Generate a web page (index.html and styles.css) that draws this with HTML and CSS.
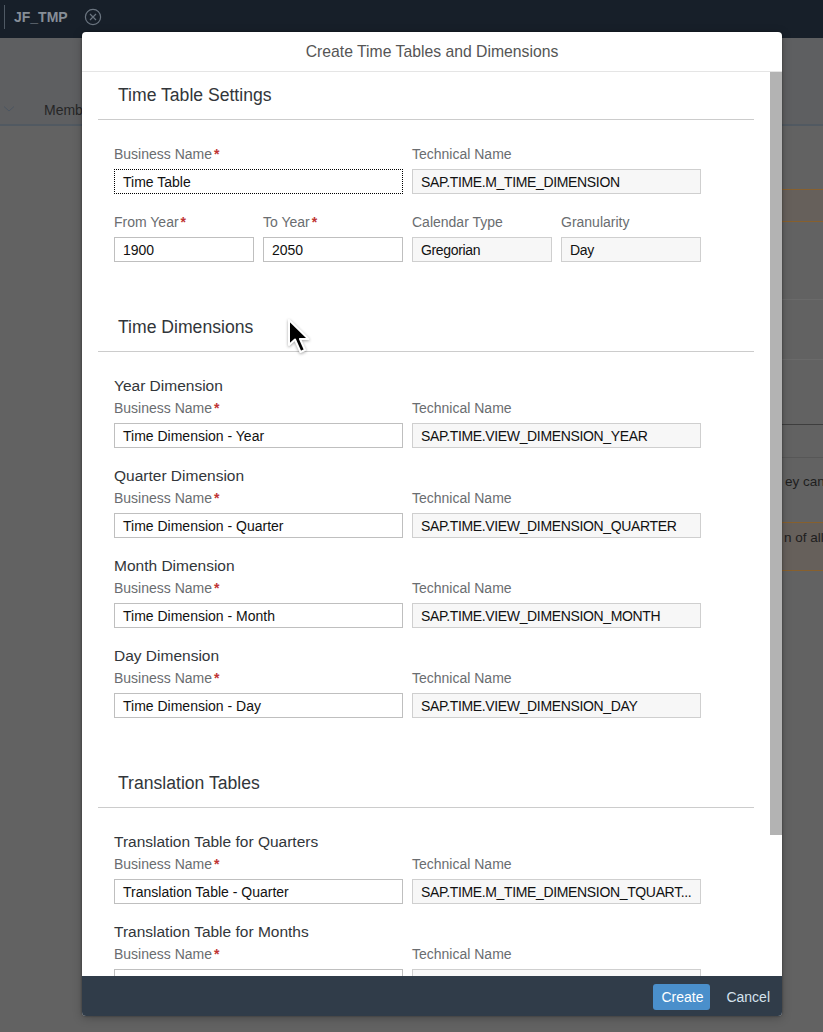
FILE: index.html
```html
<!DOCTYPE html>
<html lang="en">
<head>
<meta charset="utf-8">
<title>Create Time Tables and Dimensions</title>
<link rel="stylesheet" href="styles.css">
</head>
<body>
<div class="app">
  <header class="topbar">
    <span class="topbar-sep"></span>
    <span class="app-name">JF_TMP</span>
    <svg class="close-ic" width="18" height="18" viewBox="0 0 18 18"><circle cx="9" cy="9" r="7.6" fill="none" stroke="#6b7580" stroke-width="1.2"/><path d="M6 6 L12 12 M12 6 L6 12" stroke="#6b7580" stroke-width="1.2"/></svg>
  </header>
  <nav class="tabbar">
    <svg class="chev" width="12" height="8" viewBox="0 0 12 8"><path d="M1 1.5 L6 6 L11 1.5" fill="none" stroke="#4c5560" stroke-width="1"/></svg>
    <span class="tab">Members</span>
  </nav>
  <main class="app-main">
    <div class="app-left"></div>
    <div class="app-right">
      <div class="bg-row bg-warn"></div>
      <div class="bg-row bg-plain1"></div>
      <div class="bg-row bg-plain2"></div>
      <div class="bg-row bg-box"></div>
      <div class="bg-row bg-text">ey can</div>
      <div class="bg-row bg-warn2">n of all</div>
    </div>
  </main>
</div>

<div class="dialog">
  <div class="dlg-header">Create Time Tables and Dimensions</div>
  <div class="dlg-body">
    <div class="dlg-scroll">
      <section class="section">
        <h2 class="section-title">Time Table Settings</h2>
        <div class="section-body">
          <div class="grid">
            <div class="field span2">
              <label class="lbl">Business Name<span class="req">*</span></label>
              <div class="inp focus">Time Table</div>
            </div>
            <div class="field span2">
              <label class="lbl">Technical Name</label>
              <div class="inp ro">SAP.TIME.M_TIME_DIMENSION</div>
            </div>
            <div class="field">
              <label class="lbl">From Year<span class="req">*</span></label>
              <div class="inp">1900</div>
            </div>
            <div class="field">
              <label class="lbl">To Year<span class="req">*</span></label>
              <div class="inp">2050</div>
            </div>
            <div class="field">
              <label class="lbl">Calendar Type</label>
              <div class="inp ro">Gregorian</div>
            </div>
            <div class="field">
              <label class="lbl">Granularity</label>
              <div class="inp ro">Day</div>
            </div>
          </div>
        </div>
      </section>

      <section class="section">
        <h2 class="section-title">Time Dimensions</h2>
        <div class="section-body groups">
          <div class="group">
            <h3 class="sub">Year Dimension</h3>
            <div class="grid">
              <div class="field span2"><label class="lbl">Business Name<span class="req">*</span></label><div class="inp">Time Dimension - Year</div></div>
              <div class="field span2"><label class="lbl">Technical Name</label><div class="inp ro">SAP.TIME.VIEW_DIMENSION_YEAR</div></div>
            </div>
          </div>
          <div class="group">
            <h3 class="sub">Quarter Dimension</h3>
            <div class="grid">
              <div class="field span2"><label class="lbl">Business Name<span class="req">*</span></label><div class="inp">Time Dimension - Quarter</div></div>
              <div class="field span2"><label class="lbl">Technical Name</label><div class="inp ro">SAP.TIME.VIEW_DIMENSION_QUARTER</div></div>
            </div>
          </div>
          <div class="group">
            <h3 class="sub">Month Dimension</h3>
            <div class="grid">
              <div class="field span2"><label class="lbl">Business Name<span class="req">*</span></label><div class="inp">Time Dimension - Month</div></div>
              <div class="field span2"><label class="lbl">Technical Name</label><div class="inp ro">SAP.TIME.VIEW_DIMENSION_MONTH</div></div>
            </div>
          </div>
          <div class="group">
            <h3 class="sub">Day Dimension</h3>
            <div class="grid">
              <div class="field span2"><label class="lbl">Business Name<span class="req">*</span></label><div class="inp">Time Dimension - Day</div></div>
              <div class="field span2"><label class="lbl">Technical Name</label><div class="inp ro">SAP.TIME.VIEW_DIMENSION_DAY</div></div>
            </div>
          </div>
        </div>
      </section>

      <section class="section">
        <h2 class="section-title">Translation Tables</h2>
        <div class="section-body groups">
          <div class="group">
            <h3 class="sub">Translation Table for Quarters</h3>
            <div class="grid">
              <div class="field span2"><label class="lbl">Business Name<span class="req">*</span></label><div class="inp">Translation Table - Quarter</div></div>
              <div class="field span2"><label class="lbl">Technical Name</label><div class="inp ro">SAP.TIME.M_TIME_DIMENSION_TQUART...</div></div>
            </div>
          </div>
          <div class="group">
            <h3 class="sub">Translation Table for Months</h3>
            <div class="grid">
              <div class="field span2"><label class="lbl">Business Name<span class="req">*</span></label><div class="inp"></div></div>
              <div class="field span2"><label class="lbl">Technical Name</label><div class="inp ro"></div></div>
            </div>
          </div>
        </div>
      </section>
    </div>
    <div class="scrollbar"><div class="thumb"></div></div>
  </div>
  <div class="dlg-footer">
    <button class="btn btn-primary">Create</button>
    <button class="btn btn-ghost">Cancel</button>
  </div>
</div>

<svg class="cursor" width="30" height="42" viewBox="-4 -4 30 42">
  <path d="M0 0 L0 25 L6 19.5 L11.5 32 L16 30 L11 19 L19.5 19 Z" fill="#000" stroke="#fff" stroke-width="2" stroke-linejoin="round"/>
</svg>
</body>
</html>
```

FILE: styles.css
```css
* { box-sizing: border-box; }
html, body { margin: 0; padding: 0; }
body {
  width: 823px;
  height: 1032px;
  overflow: hidden;
  background: #626262;
  font-family: "Liberation Sans", Arial, sans-serif;
  position: relative;
}

/* background app (dimmed) */
.app { display: flex; flex-direction: column; height: 100%; }
.topbar {
  height: 38px;
  background: #171f29;
  display: flex;
  align-items: center;
  padding-left: 4px;
  padding-bottom: 4px;
}
.topbar-sep { width: 1px; height: 24px; background: #4f5964; }
.app-name { color: #868e97; font-weight: bold; font-size: 14px; margin-left: 9px; }
.close-ic { margin-left: 16px; }
.tabbar {
  height: 88px;
  background: #5e5f61;
  border-bottom: 2px solid #515961;
  display: flex;
  align-items: flex-end;
  padding: 0 0 6px 3px;
}
.chev { margin-bottom: 5px; }
.tab { margin-left: 29px; font-size: 14px; color: #262626; }
.app-main { flex: 1; display: grid; grid-template-columns: 782px 1fr; }
.app-right { display: flex; flex-direction: column; padding-top: 63px; }
.bg-row { font-size: 13.5px; color: #1e1e1e; white-space: nowrap; overflow: hidden; }
.bg-warn { height: 33px; border-top: 1px solid #87602e; border-bottom: 1px solid #87602e; background: #66605b; }
.bg-plain1 { height: 78px; border-bottom: 1px solid #6a6a6a; }
.bg-plain2 { height: 60px; border-bottom: 1px solid #6a6a6a; }
.bg-box { height: 34px; margin-top: 64px; border-top: 1px solid #3e3e3e; border-bottom: 1px solid #575757; }
.bg-text { height: 64px; padding: 16px 0 0 3px; }
.bg-warn2 { height: 49px; border-top: 1px solid #87602e; border-bottom: 1px solid #87602e; background: #66605b; padding: 7px 0 0 2px; }

/* dialog */
.dialog {
  position: absolute;
  left: 82px;
  top: 32px;
  width: 700px;
  height: 984px;
  background: #fff;
  border-radius: 4px;
  box-shadow: 0 0 2px rgba(0,0,0,0.45), 0 2px 10px rgba(0,0,0,0.25);
  display: flex;
  flex-direction: column;
  overflow: hidden;
}
.dlg-header {
  height: 40px;
  flex: none;
  border-bottom: 1px solid #e5e5e5;
  display: flex;
  align-items: center;
  justify-content: center;
  font-size: 15.75px;
  color: #555;
}
.dlg-body { flex: 1; display: flex; min-height: 0; }
.dlg-scroll { flex: 1; overflow: hidden; padding: 0 16px; }
.scrollbar { width: 12px; flex: none; background: #fff; }
.thumb { height: 763px; background: #b3b3b3; }

.section-title {
  margin: 0;
  padding: 13px 0 14px 20px;
  font-size: 17.6px;
  line-height: 20px;
  font-weight: normal;
  color: #32363a;
  border-bottom: 1px solid #cccccc;
}
.section-body { padding: 25px 16px 42px; }
.groups { display: flex; flex-direction: column; gap: 19px; }
.sub { margin: 0 0 4px; font-size: 15.5px; line-height: 18px; font-weight: normal; color: #32363a; }
.grid {
  display: grid;
  grid-template-columns: repeat(4, 140px);
  column-gap: 9px;
  row-gap: 19px;
}
.field { display: flex; flex-direction: column; }
.span2 { grid-column: span 2; }
.lbl { font-size: 14px; line-height: 18px; color: #6a6d70; margin-bottom: 6px; }
.req { color: #c03434; font-weight: bold; margin-left: 2px; }
.inp {
  height: 25px;
  border: 1px solid #bfbfbf;
  background: #fff;
  font-size: 14px;
  line-height: 24px;
  padding: 0 8px;
  color: #111;
  white-space: nowrap;
  overflow: hidden;
}
.inp.ro { background: #f7f7f7; border-color: #cfcfcf; letter-spacing: -0.35px; }
.inp.focus { border: 1px dotted #000; }

.dlg-footer {
  height: 40px;
  flex: none;
  background: #303c49;
  display: flex;
  align-items: center;
  justify-content: flex-end;
  gap: 8px;
  padding: 1px 4px 0 0;
}
.btn {
  font-family: inherit;
  font-size: 14px;
  height: 26px;
  border: 0;
  border-radius: 3px;
  padding: 0 8px;
  cursor: pointer;
}
.btn-primary { background: #4a8fcb; color: #fff; width: 57px; }
.btn-ghost { background: transparent; color: #d5e2ee; }

.cursor {
  position: absolute;
  left: 285px;
  top: 316px;
  filter: drop-shadow(0 1px 1.5px rgba(0,0,0,0.35));
}
```
